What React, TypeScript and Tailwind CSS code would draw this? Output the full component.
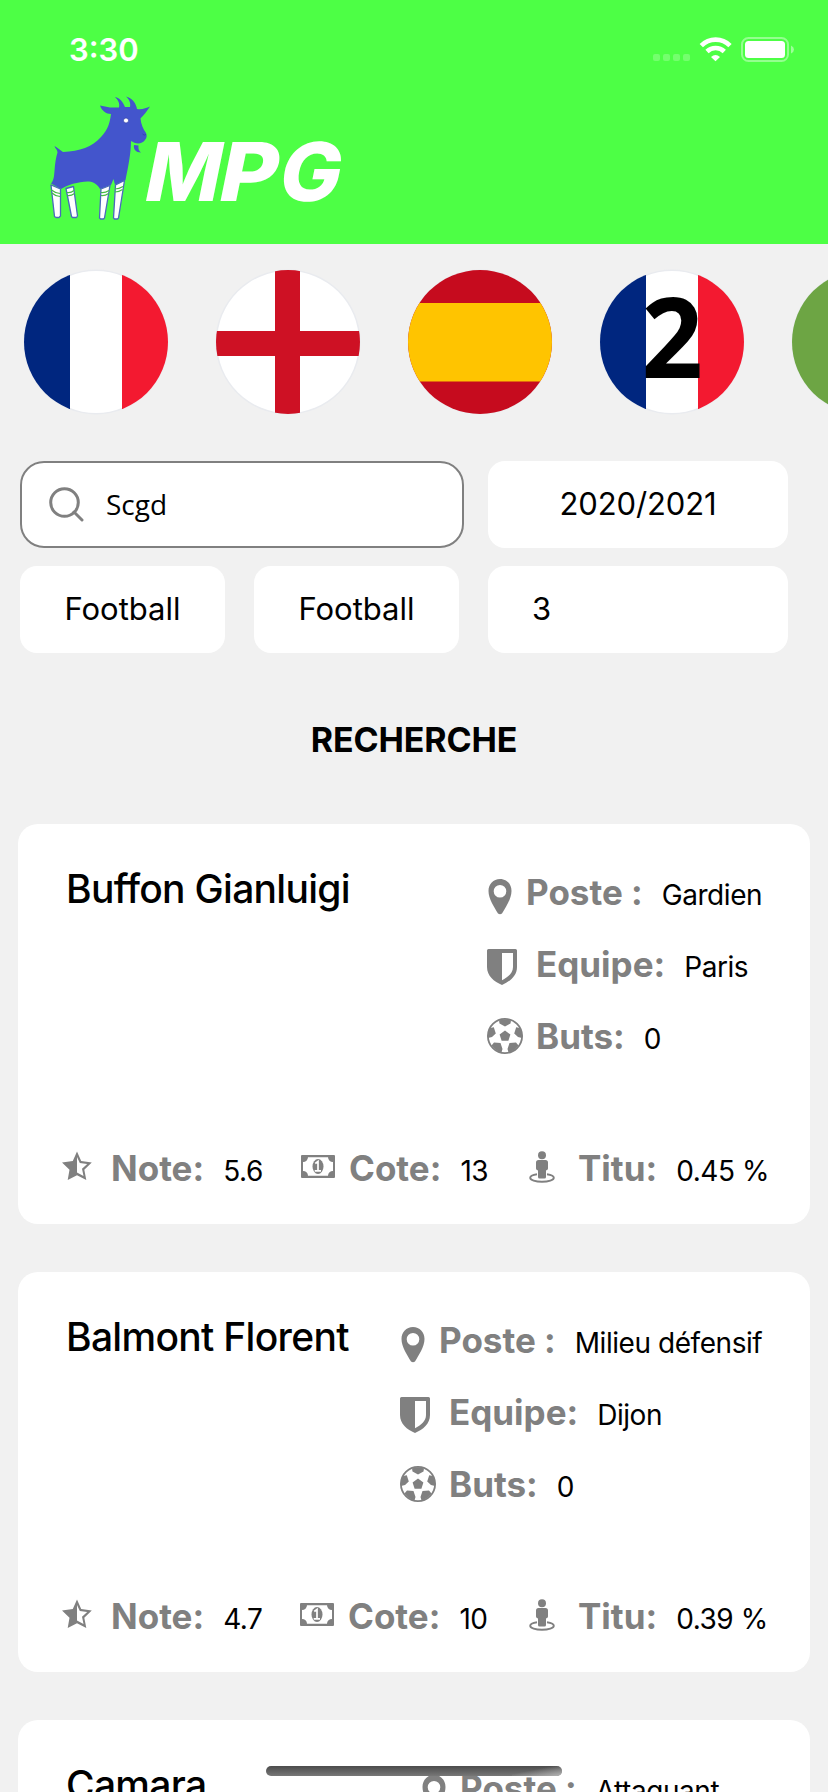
import React from "react";

const players = [
  { name: "Buffon Gianluigi", poste: "Gardien", equipe: "Paris", buts: "0", note: "5.6", cote: "13", titu: "0.45 %", infoPad: "pl-[469px]", cotePad: "ml-[38px]", tituPad: "ml-[37px]" },
  { name: "Balmont Florent", poste: "Milieu défensif", equipe: "Dijon", buts: "0", note: "4.7", cote: "10", titu: "0.39 %", infoPad: "pl-[382px]", cotePad: "ml-[37px]", tituPad: "ml-[38px]" },
  { name: "Camara", poste: "Attaquant", equipe: "Dijon", buts: "0", note: "4.9", cote: "12", titu: "0.42 %", infoPad: "pl-[403px]", cotePad: "ml-[37px]", tituPad: "ml-[38px]" },
];

function Logo() {
  return (
    <svg className="block h-[140px] w-[300px] overflow-visible" viewBox="45 90 300 140">
      <path
        fill="#4355cc"
        d="M100 105.500 L110 107.500 L119 107.500 C120 103 118 100 115 97 C120 98 123 102 125 107 L130 107 C131 103 129 99 126 96.500 C132 98 136 103 137 109 C142 110 146 108 150 106.500 C147 111 144 115 140.500 118.500 C141 124 143 129 146 133 C147 135 147 138 145 140 C143 143 139 144 135 143 L131 141 C131 153 128 168 125.500 180 L115 185 L113.500 179 L111 185 L100 189 C98 185 94 182 89 181.500 C80 181 67 185 61 189 L51 183.500 C54 180 54 176 54.500 171 C55 163 56 157 57.500 152.500 C57.500 149.500 55 148.500 54.500 146 C58 148 60 150 63 152 C80 151 92 147 101 137 C108 130 110 122 111 114 C106 114 102 111 100 105.500Z"
      />
      <path fill="#4355cc" d="M134 145 L138.500 145.500 C138 149 139 151 141 152.500 C136 152.500 133 149 134 145Z" />
      <circle cx="126" cy="120.500" r="2.500" fill="#fff" stroke="#2f3fa8" strokeWidth=".7" />
      <path d="M142.500 134 Q144 136 146 134.500" stroke="#2f3fa8" strokeWidth=".8" fill="none" />
      <g fill="#fff" stroke="#4b68bd" strokeWidth="1.300" strokeLinejoin="round">
        <path d="M51 185 L60.500 189 L60.500 216 L59 217.500 L56 217.500 L54.500 216.500Z" />
        <path d="M66 188.500 L73.500 186.500 L77.500 216 L76.500 217.500 L72.500 217.500 L71.500 216.500Z" />
        <path d="M101 189 L110 185.500 L104.500 218 L103.500 219 L100.500 219 L99.500 218Z" />
        <path d="M115.500 185 L124.500 180.500 L118.500 218 L117.500 219 L114.500 219 L113.500 218Z" />
      </g>
      <path
        fill="none"
        stroke="#4b4"
        strokeWidth="1.100"
        d="M51.500 190 Q55 193 60 193.500 M52 193 Q55 196 60 196.500 M67 192.500 Q71 193 74 190.500 M67.500 195.500 Q71 196 74.500 193.500 M101 192.500 Q105 193 109 190.500 M101 195.500 Q105 196 108.500 193.500 M115 189 Q119 189 123 186.500 M115 192 Q119 192 122.500 189.500"
      />
      <g fill="#fff" fontFamily="Inter, sans-serif" fontWeight="800" fontSize="81">
        <text transform="translate(141.500 201) skewX(-11.500) scale(0.990 1)">M</text>
        <text transform="translate(215.500 201) skewX(-11.500) scale(1.110 1)">P</text>
        <text transform="translate(275.500 201) skewX(-11.500) scale(1.010 1)">G</text>
      </g>
    </svg>
  );
}

function StatusIcons() {
  return (
    <svg className="block h-7 w-[144px]" viewBox="651 35 144 28">
      <g fill="#fff" fillOpacity=".22">
        <rect x="653" y="54" width="7" height="7" rx="2" />
        <rect x="663" y="54" width="7" height="7" rx="2" />
        <rect x="673" y="54" width="7" height="7" rx="2" />
        <rect x="683" y="54" width="7" height="7" rx="2" />
      </g>
      <g fill="none" stroke="#fff" strokeWidth="4.600">
        <path d="M701.300 45.700 A20 20 0 0 1 730 45.700" />
        <path d="M707 51.500 A12.500 12.500 0 0 1 724.300 51.500" />
      </g>
      <path fill="#fff" d="M711 57 Q715.500 53 720 57 L715.500 61.200Z" />
      <rect x="742" y="38" width="46" height="23" rx="6.500" fill="none" stroke="#fff" strokeOpacity=".4" strokeWidth="2" />
      <rect x="745" y="41" width="40" height="17" rx="3.500" fill="#fff" />
      <path fill="#fff" fillOpacity=".45" d="M791 45.500 Q794 47 794 49.500 Q794 52 791 53.500Z" />
    </svg>
  );
}

function Flag({ kind }: { kind: string }) {
  const id = "clip-" + kind;
  return (
    <svg className="block size-[146px] shrink-0" viewBox="-1 -1 146 146">
      <defs>
        <clipPath id={id}>
          <circle cx="72" cy="72" r="72" />
        </clipPath>
      </defs>
      <circle cx="72" cy="72" r="72.500" fill="#e9ebef" />
      <g clipPath={"url(#" + id + ")"}>
        {kind !== "brazil" && <circle cx="72" cy="72" r="71" fill="#fff" />}
        {(kind === "france" || kind === "ligue2") && (
          <>
            <rect width="46" height="144" fill="#00267f" />
            <rect x="98" width="46" height="144" fill="#f31930" />
          </>
        )}
        {kind === "england" && (
          <>
            <rect x="59" width="25" height="144" fill="#ce1124" />
            <rect y="61" width="144" height="25" fill="#ce1124" />
          </>
        )}
        {kind === "spain" && (
          <>
            <rect width="144" height="144" fill="#c60b1e" />
            <rect y="33" width="144" height="78.500" fill="#ffc400" />
          </>
        )}
        {kind === "brazil" && <rect width="144" height="144" fill="#6da544" />}
      </g>
      {kind === "ligue2" && (
        <text transform="translate(41.500 108) scale(0.970 1)" fontFamily="Open Sans, sans-serif" fontWeight="700" fontSize="111">
          2
        </text>
      )}
    </svg>
  );
}

function Pin() {
  return (
    <svg className="mt-[3px] block h-9 w-[24px] shrink-0" viewBox="0 0 24 36">
      <path
        fill="#808080"
        fillRule="evenodd"
        d="M12 0C5.300 0 .5 5 .5 12c0 8 6 16.500 9.500 22.500q2 1.500 4 0C17.500 28.500 23.500 20 23.500 12 23.500 5 18.700 0 12 0Zm0 6a6.300 6.300 0 1 1 0 12.600A6.300 6.300 0 0 1 12 6Z"
      />
    </svg>
  );
}

function Shield() {
  return (
    <svg className="block h-9 w-[30px] shrink-0" viewBox="0 0 30 36">
      <path
        fill="#808080"
        fillRule="evenodd"
        d="M1.500 0h27Q30 0 30 1.500V18c0 9-7 14.500-15 18C7 32.500 0 27 0 18V1.500Q0 0 1.500 0ZM15 4v27.200c6-3.200 11-7 11-13.200V4Z"
      />
    </svg>
  );
}

function Ball() {
  return (
    <svg className="block size-9 shrink-0" viewBox="0 0 36 36">
      <circle cx="18" cy="18" r="17.100" fill="none" stroke="#808080" strokeWidth="1.800" />
      <path
        fill="#808080"
        d="M18 12.500l5.400 4-2 6.300h-6.800l-2-6.300ZM12 2.500 Q18 0 24 2.500 L23.500 5.500 18 8.500 12.500 5.500ZM29.200 9.300 L33 10 Q36 15 35 20 L31 19 27.200 15.400ZM6.800 9.300 L3 10 Q0 15 1 20 L5 19 8.800 15.400ZM22.500 25 L29 24.500 31.500 27.500 Q27 33.500 21.500 34.500 L20.500 31ZM13.500 25 L7 24.500 4.500 27.500 Q9 33.500 14.500 34.500 L15.500 31Z"
      />
    </svg>
  );
}

function HalfStar() {
  return (
    <svg className="block h-[30px] w-[30px] shrink-0" viewBox="0 0 30 30">
      <path
        fill="#808080"
        fillRule="evenodd"
        d="M15 .5 19.200 10 29.800 11.500 22.300 18.800 24.300 29 15 24.200 5.700 29 7.500 18.800 0 11.500 10.800 10ZM15 6V21.500L21.500 25 20 17.800 25.200 12.900 17.800 11.900Z"
      />
    </svg>
  );
}

function Bill() {
  return (
    <svg className="block h-[23px] w-[34px] shrink-0" viewBox="0 0 34 23">
      <path
        fill="#808080"
        fillRule="evenodd"
        d="M1 0H33Q34 0 34 1V22Q34 23 33 23H1Q0 23 0 22V1Q0 0 1 0ZM7 2.200A4.900 4.900 0 0 1 2 7V16A4.900 4.900 0 0 1 7 20.800H27A4.900 4.900 0 0 1 32 16V7A4.900 4.900 0 0 1 27 2.200Z"
      />
      <ellipse cx="17" cy="11.500" rx="5.500" ry="7.500" fill="#808080" />
      <path fill="none" stroke="#fff" strokeWidth="1.700" d="M14.300 8.500 L17 6.500V15.500M13.700 15.800H20" />
    </svg>
  );
}

function Person() {
  return (
    <svg className="block h-8 w-[26px] shrink-0" viewBox="0 0 26 32">
      <circle cx="13" cy="4.200" r="4" fill="#808080" />
      <path fill="#808080" d="M9.500 9H16.500Q19 9 19 11.500V17.500Q19 19 17 19.500V26Q17 27.500 15.500 27.500H10.500Q9 27.500 9 26V19.500Q7 19 7 17.500V11.500Q7 9 9.500 9Z" />
      <path fill="none" stroke="#808080" strokeWidth="1.900" d="M8 23.200C4 23.800 1.200 25 1.200 26.700 1.200 29 6.500 30.700 13 30.700S24.800 29 24.800 26.700C24.800 25 22 23.800 18 23.200" />
    </svg>
  );
}

const label = "font-bold text-[#808080] text-[35px] leading-[42px] whitespace-pre";
const value = "ml-[19px] text-black text-[28px] leading-[34px] tracking-[-0.45px] whitespace-pre";

function Card({ p }: { p: (typeof players)[number] }) {
  return (
    <article className="flex h-[400px] w-[792px] shrink-0 flex-col rounded-[20px] bg-white">
      <div className="flex h-[323px] pt-[44px]">
        <h2 className="-mt-[1px] -mr-[440px] w-[440px] shrink-0 pl-[48px] text-[39px] leading-[44px] font-medium tracking-[-0.7px] whitespace-nowrap [font-feature-settings:'calt'_0,'liga'_0]">{p.name}</h2>
        <div className={"flex flex-col " + p.infoPad}>
          <div className="flex h-[72px] items-start pt-[3px]">
            <div className="flex w-[39px] pt-[5px] pl-px"><Pin /></div>
            <div className="flex items-baseline"><span className={label}>Poste :</span><span className={value}>{p.poste}</span></div>
          </div>
          <div className="flex h-[72px] items-start pt-[3px]">
            <div className="w-[49px] pt-[6px]"><Shield /></div>
            <div className="flex items-baseline"><span className={label}>Equipe:</span><span className={value}>{p.equipe}</span></div>
          </div>
          <div className="flex h-[72px] items-start pt-[3px]">
            <div className="w-[49px] pt-[3px]"><Ball /></div>
            <div className="flex items-baseline"><span className={label}>Buts:</span><span className={value}>{p.buts}</span></div>
          </div>
        </div>
      </div>
      <div className="flex h-[50px] items-start pl-[44px]">
        <div className="w-[49px] pt-[4px]"><HalfStar /></div>
        <div className="flex w-[152px] items-baseline"><span className={label}>Note:</span><span className={value}>{p.note}</span></div>
        <div className={"flex items-start " + p.cotePad}>
          <div className="w-[48px] pt-[8px]"><Bill /></div>
          <div className="flex w-[143px] items-baseline"><span className={label}>Cote:</span><span className={value}>{p.cote}</span></div>
        </div>
        <div className={"flex items-start " + p.tituPad}>
          <div className="w-[49px] pt-[4px]"><Person /></div>
          <div className="flex items-baseline"><span className={label}>Titu:</span><span className={value}>{p.titu}</span></div>
        </div>
      </div>
    </article>
  );
}

export default function App() {
  return (
    <div className="relative flex h-[1792px] w-[828px] flex-col overflow-hidden bg-[#f1f1f1] font-['Inter',sans-serif] text-black">
      <header className="h-[244px] shrink-0 bg-[#4dff45]">
        <div className="flex h-[90px] items-start justify-between pt-[32px] pr-[33px] pl-[69px]">
          <span className="text-[31px] leading-[36px] font-semibold text-white">3:30</span>
          <div className="pt-[3px]"><StatusIcons /></div>
        </div>
        <div className="pl-[45px]"><Logo /></div>
      </header>

      <nav className="flex h-[217px] shrink-0 gap-[46px] pt-[25px] pl-[23px]">
        <Flag kind="france" />
        <Flag kind="england" />
        <Flag kind="spain" />
        <Flag kind="ligue2" />
        <Flag kind="brazil" />
      </nav>

      <section className="flex shrink-0 flex-col gap-[18px] pl-[20px] text-[31px] leading-[38px]">
        <div className="flex gap-[24px]">
          <div className="flex h-[87px] w-[444px] items-center rounded-[24px] border-2 border-[#808080] bg-white pl-[27px]">
            <svg className="size-[35px]" viewBox="0 0 35 35" fill="none" stroke="#808080" strokeWidth="3">
              <circle cx="15.500" cy="15.500" r="13.800" />
              <path d="M25 25l8 8" strokeLinecap="round" />
            </svg>
            <span className="ml-[22px] pb-[2px] font-['Open_Sans',sans-serif] text-[28px]">Scgd</span>
          </div>
          <div className="flex h-[87px] w-[300px] items-center justify-center rounded-[17px] bg-white pb-[2px] tracking-[-0.1px]">2020/2021</div>
        </div>
        <div className="flex">
          <div className="flex h-[87px] w-[205px] items-center justify-center rounded-[17px] bg-white pb-[2px]">Football</div>
          <div className="ml-[29px] flex h-[87px] w-[205px] items-center justify-center rounded-[17px] bg-white pb-[2px]">Football</div>
          <div className="ml-[29px] flex h-[87px] w-[300px] items-center rounded-[17px] bg-white pb-[2px] pl-[44px]">3</div>
        </div>
      </section>

      <h1 className="mt-[66px] h-[105px] shrink-0 text-center text-[34px] leading-[42px] font-bold tracking-[-0.15px]">RECHERCHE</h1>

      <main className="flex flex-col gap-[48px] pl-[18px]">
        {players.map((p) => (
          <Card key={p.name} p={p} />
        ))}
      </main>

      <div className="absolute top-[1766px] left-[266px] h-[10px] w-[296px] overflow-hidden rounded-full bg-gradient-to-b from-[#4c4c4c] to-[#777]">
        <div className="ml-auto h-full w-[50px] bg-gradient-to-br from-transparent from-40% to-[#b4b4b4]" />
      </div>
    </div>
  );
}
